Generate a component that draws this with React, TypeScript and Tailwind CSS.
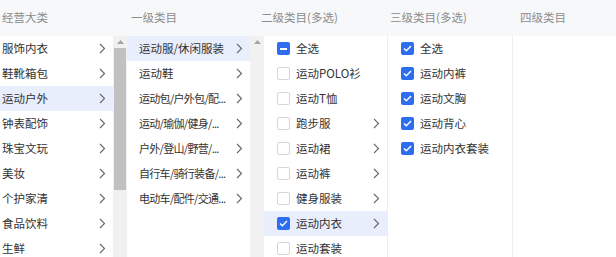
import React from "react";

const FONT = "font-['Noto_Sans_CJK_SC','Noto_Sans',sans-serif]";

function Chevron() {
  return (
    <svg width="7" height="11" viewBox="0 0 7 11" className="shrink-0">
      <path d="M1 1l4.5 4.5L1 10" fill="none" stroke="#666" strokeWidth="1.1" />
    </svg>
  );
}

function Checkbox({ state }: { state: "none" | "checked" | "indet" }) {
  if (state === "none") {
    return <span className="w-[13px] h-[13px] rounded-[2px] border border-[#d3d6dc] bg-white shrink-0" />;
  }
  return (
    <span className="w-[13px] h-[13px] rounded-[2px] bg-[#2d6ef0] shrink-0 flex items-center justify-center">
      {state === "checked" ? (
        <svg width="9" height="7" viewBox="0 0 9 7">
          <path d="M1 3.5l2.3 2.2L8 1" fill="none" stroke="#fff" strokeWidth="1.4" />
        </svg>
      ) : (
        <span className="w-[7px] h-[2px] bg-white" />
      )}
    </span>
  );
}

function Scrollbar({ thumb }: { thumb: boolean }) {
  return (
    <div className="w-[14px] bg-[#f1f1f1] flex flex-col items-center shrink-0">
      <div className="h-[12px] w-full flex items-center justify-center">
        <svg width="7" height="4" viewBox="0 0 7 4">
          <path d="M0 4L3.5 0L7 4Z" fill="#a3a3a3" />
        </svg>
      </div>
      {thumb && <div className="w-[12px] h-[142px] bg-[#c1c1c1]" />}
    </div>
  );
}

const col1 = ["服饰内衣", "鞋靴箱包", "运动户外", "钟表配饰", "珠宝文玩", "美妆", "个护家清", "食品饮料", "生鲜"];
const col2: { t: string; tight: boolean }[] = [
  { t: "运动服/休闲服装", tight: false },
  { t: "运动鞋", tight: false },
  { t: "运动包/户外包/配...", tight: true },
  { t: "运动/瑜伽/健身/...", tight: true },
  { t: "户外/登山/野营/...", tight: true },
  { t: "自行车/骑行装备/...", tight: true },
  { t: "电动车/配件/交通...", tight: true },
];
const col3: { t: string; s: "none" | "checked" | "indet"; c: boolean; h?: boolean }[] = [
  { t: "全选", s: "indet", c: false },
  { t: "运动POLO衫", s: "none", c: false },
  { t: "运动T恤", s: "none", c: false },
  { t: "跑步服", s: "none", c: true },
  { t: "运动裙", s: "none", c: true },
  { t: "运动裤", s: "none", c: true },
  { t: "健身服装", s: "none", c: true },
  { t: "运动内衣", s: "checked", c: true, h: true },
  { t: "运动套装", s: "none", c: false },
];
const col4 = ["全选", "运动内裤", "运动文胸", "运动背心", "运动内衣套装"];

export default function App() {
  return (
    <div className={`w-[616px] h-[257px] overflow-hidden bg-white text-[11.5px] text-[#333] ${FONT}`}>
      <div className="flex h-[36px] bg-[#f7f8fa] items-center text-[#8c8c8c]">
        <div className="w-[130px] pl-[2px]">经营大类</div>
        <div className="w-[130px] pl-[1px]">一级类目</div>
        <div className="w-[130px] pl-[1px]">二级类目(多选)</div>
        <div className="w-[130px]">三级类目(多选)</div>
        <div className="flex-1">四级类目</div>
      </div>
      <div className="flex h-[221px]">
        <div className="w-[113px] flex flex-col shrink-0">
          {col1.map((t) => (
            <div
              key={t}
              className={`h-[25px] shrink-0 flex items-center justify-between pl-[2px] pr-[7px] ${t === "运动户外" ? "bg-[#e9eefc]" : ""}`}
            >
              <span>{t}</span>
              <Chevron />
            </div>
          ))}
        </div>
        <Scrollbar thumb />
        <div className="w-[123px] flex flex-col shrink-0">
          {col2.map((r, i) => (
            <div
              key={r.t}
              className={`h-[25px] shrink-0 flex items-center justify-between pl-[12px] pr-[7px] ${i === 0 ? "bg-[#e9eefc]" : ""}`}
            >
              <span className={`whitespace-nowrap ${r.tight ? "text-[11px] tracking-[-0.7px]" : ""}`}>{r.t}</span>
              <Chevron />
            </div>
          ))}
        </div>
        <Scrollbar thumb={false} />
        <div className="w-[124px] flex flex-col shrink-0 border-r border-[#eeeeee]">
          {col3.map((r) => (
            <div
              key={r.t}
              className={`h-[25px] shrink-0 flex items-center pl-[13px] pr-[7px] ${r.h ? "bg-[#e9eefc]" : ""}`}
            >
              <Checkbox state={r.s} />
              <span className="ml-[6px] flex-1">{r.t}</span>
              {r.c && <Chevron />}
            </div>
          ))}
        </div>
        <div className="w-[125px] flex flex-col shrink-0 border-r border-[#eeeeee]">
          {col4.map((t) => (
            <div key={t} className="h-[25px] shrink-0 flex items-center pl-[13px]">
              <Checkbox state="checked" />
              <span className="ml-[6px]">{t}</span>
            </div>
          ))}
        </div>
        <div className="flex-1" />
      </div>
    </div>
  );
}
